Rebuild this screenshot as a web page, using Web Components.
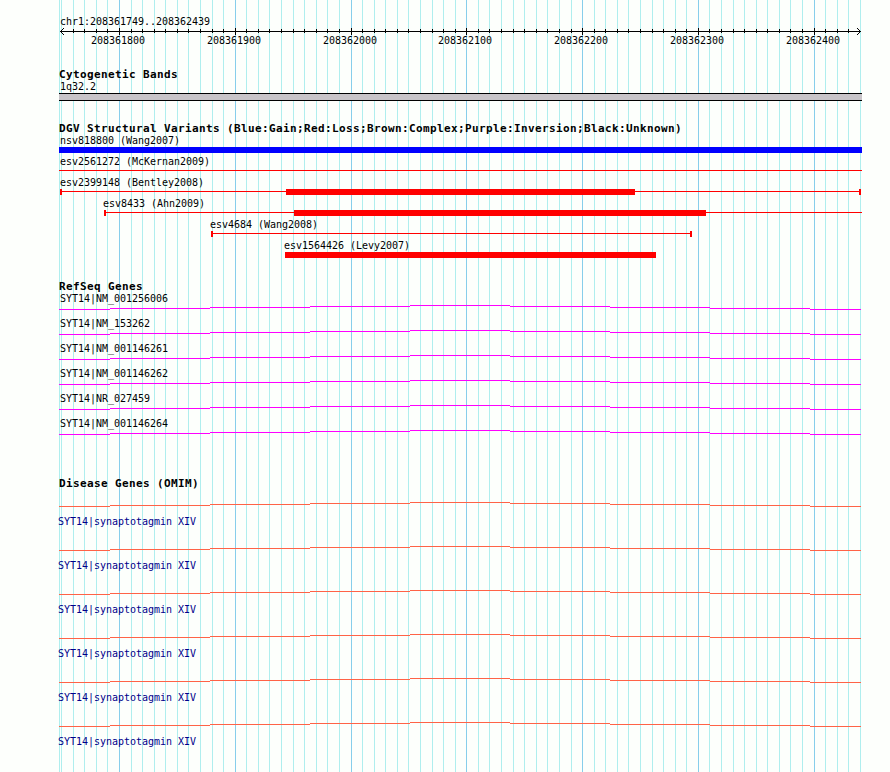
<!DOCTYPE html>
<html lang="en">
<head>
<meta charset="utf-8">
<title>chr1:208361749..208362439</title>
<style>
   body { margin: 0; background: #fdfffc; }
</style>
</head>
<body>
<genome-browser></genome-browser>

<script>
'use strict';

//x of the first 10bp line and the distance between lines
const FIRST_LINE = 61.58;
const LINE_STEP = 11.578;
const LINE_COUNT = 70;

function lineX(index) {
   return Math.floor(FIRST_LINE + LINE_STEP * index);
}

function isMajor(index) {
   return index % 10 === 5;
}

//everything is drawn from x=59 to x=862
const LEFT = 59;
const WIDTH = 803;

function rect(x, y, width, height, color) {
   return `<rect x="${x}" y="${y}" width="${width}" height="${height}" fill="${color}"/>`;
}

class GridLines extends HTMLElement {
   constructor() {
      super();
      let lines = rect(59, 0, 1, 772, '#afeeee');
      for (let i = 0; i < LINE_COUNT; i++) {
         lines += rect(lineX(i), 0, 1, 772, isMajor(i) ? '#87ceeb' : '#afeeee');
      }
      this.attachShadow({mode: 'open'}).innerHTML = `
         <style>
            :host { display: block; width: 890px; height: 772px; }
            svg { display: block; }
         </style>
         <svg width="890" height="772" shape-rendering="crispEdges">${lines}</svg>`;
   }
}

class ChromosomeRuler extends HTMLElement {
   constructor() {
      super();
      let ticks = '';
      let labels = '';
      let arrows = '';
      for (let i = 1; i < LINE_COUNT - 1; i++) {
         const x = lineX(i) - LEFT;
         ticks += isMajor(i) ? rect(x, 1, 1, 7, '#000') : rect(x, 2, 1, 4, '#000');
         if (isMajor(i)) {
            labels += `<text x="${x - 28}" y="17">${208361750 + i * 10}</text>`;
         }
      }
      for (let i = 1; i <= 3; i++) {
         [4 - i, 4 + i].forEach(y => {
            arrows += rect(1 + i, y, 1, 1, '#000') + rect(801 - i, y, 1, 1, '#000');
         });
      }
      this.attachShadow({mode: 'open'}).innerHTML = `
         <style>
            :host { display: block; height: 53px; }
            div { height: 12px; line-height: 14px; padding-left: 1px; }
            svg { display: block; overflow: visible; }
         </style>
         <div><slot></slot></div>
         <svg width="${WIDTH}" height="30" shape-rendering="crispEdges">
            ${rect(1, 4, 801, 1, '#000')}
            ${ticks}
            ${arrows}
            ${labels}
         </svg>`;
   }
}

class BrowserTrack extends HTMLElement {
   constructor() {
      super();
      this.attachShadow({mode: 'open'}).innerHTML = `
         <style>
            :host { display: block; }
            h2 { margin: 0; height: 12px; font: bold 11px/14px "DejaVu Sans Mono", monospace; letter-spacing: 0.378px; }
         </style>
         <h2></h2>
         <slot></slot>`;
   }

   connectedCallback() {
      this.shadowRoot.querySelector('h2').textContent = this.getAttribute('name');
   }
}

class CytoBand extends HTMLElement {
   constructor() {
      super();
      this.attachShadow({mode: 'open'}).innerHTML = `
         <style>
            :host { display: block; width: ${WIDTH}px; height: 42px; }
            .label { height: 13px; line-height: 14px; padding-left: 1px; }
            .band { height: 6px; background: #c8c4c8; border: solid #000; border-width: 1px 0; }
         </style>
         <div class="label"><slot></slot></div>
         <div class="band"></div>`;
   }
}

//span = thin line, box = thick bar, caps = x of the end marks
class StructuralVariant extends HTMLElement {
   connectedCallback() {
      const color = this.getAttribute('color') || '#f00';
      const numbers = name => (this.getAttribute(name) || '').split(' ').filter(Boolean).map(Number);
      const span = numbers('span');
      const box = numbers('box');
      let shapes = '';
      if (span.length) shapes += rect(span[0] - LEFT, 2, span[1] - span[0], 1, color);
      if (box.length) shapes += rect(box[0] - LEFT, 0, box[1] - box[0], 6, color);
      numbers('caps').forEach(x => { shapes += rect(x - LEFT, 0, 2, 6, color); });

      this.attachShadow({mode: 'open'}).innerHTML = `
         <style>
            :host { display: block; height: 21px; }
            .label { height: 13px; line-height: 14px; padding-left: ${Number(this.getAttribute('label-x')) - LEFT}px; }
            svg { display: block; }
         </style>
         <div class="label"><slot></slot></div>
         <svg width="${WIDTH}" height="6" shape-rendering="crispEdges">${shapes}</svg>`;
   }
}

//intron line that climbs one pixel per step up to the middle
function intron(color) {
   const edges = [59, 110, 210, 310, 410, 510, 610, 710, 810, 861];
   const tops = [4, 3, 2, 1, 0, 1, 2, 3, 4];
   let shapes = '';
   tops.forEach((top, i) => {
      shapes += rect(edges[i] - LEFT, top, edges[i + 1] - edges[i], 1, color);
   });
   return `<svg width="${WIDTH}" height="5" shape-rendering="crispEdges">${shapes}</svg>`;
}

class RefseqGene extends HTMLElement {
   constructor() {
      super();
      this.attachShadow({mode: 'open'}).innerHTML = `
         <style>
            :host { display: block; height: 25px; }
            .label { height: 13px; line-height: 14px; padding-left: 1px; }
            svg { display: block; }
         </style>
         <div class="label"><slot></slot></div>
         ${intron('#f0f')}`;
   }
}

class DiseaseGene extends HTMLElement {
   constructor() {
      super();
      this.attachShadow({mode: 'open'}).innerHTML = `
         <style>
            :host { display: block; height: 44px; color: #00008b; }
            .label { height: 12px; margin: 9px 0 0 -1px; }
            svg { display: block; }
         </style>
         ${intron('#ff6347')}
         <div class="label"><slot></slot></div>`;
   }
}

class GenomeBrowser extends HTMLElement {
   constructor() {
      super();
      this.attachShadow({mode: 'open'}).innerHTML = `
         <style>
            :host {
               display: grid;
               width: 890px;
               height: 772px;
               overflow: hidden;
               color: #000;
               font: 10px/12px "DejaVu Sans Mono", monospace;
               letter-spacing: -0.02px;
               white-space: nowrap;
            }
            grid-lines, main { grid-area: 1 / 1; }
            main { padding: 15px 0 0 ${LEFT}px; }
            .variants { height: 158px; }
            .refseq { height: 197px; }
            .disease-list { padding-top: 13px; }
         </style>
         <grid-lines></grid-lines>
         <main>
            <chromosome-ruler>chr1:208361749..208362439</chromosome-ruler>
            <browser-track name="Cytogenetic Bands">
               <cyto-band>1q32.2</cyto-band>
            </browser-track>
            <browser-track class="variants" name="DGV Structural Variants (Blue:Gain;Red:Loss;Brown:Complex;Purple:Inversion;Black:Unknown)">
               <structural-variant label-x="60" box="59 862" color="#00f">nsv818800 (Wang2007)</structural-variant>
               <structural-variant label-x="60" span="59 862">esv2561272 (McKernan2009)</structural-variant>
               <structural-variant label-x="60" span="60 861" box="286 635" caps="60 859">esv2399148 (Bentley2008)</structural-variant>
               <structural-variant label-x="103" span="104 862" box="294 706" caps="104">esv8433 (Ahn2009)</structural-variant>
               <structural-variant label-x="210" span="211 692" caps="211 690">esv4684 (Wang2008)</structural-variant>
               <structural-variant label-x="284" box="285 656">esv1564426 (Levy2007)</structural-variant>
            </browser-track>
            <browser-track class="refseq" name="RefSeq Genes">
               <refseq-gene>SYT14|NM_001256006</refseq-gene>
               <refseq-gene>SYT14|NM_153262</refseq-gene>
               <refseq-gene>SYT14|NM_001146261</refseq-gene>
               <refseq-gene>SYT14|NM_001146262</refseq-gene>
               <refseq-gene>SYT14|NR_027459</refseq-gene>
               <refseq-gene>SYT14|NM_001146264</refseq-gene>
            </browser-track>
            <browser-track name="Disease Genes (OMIM)">
               <div class="disease-list">
                  <disease-gene>SYT14|synaptotagmin XIV</disease-gene>
                  <disease-gene>SYT14|synaptotagmin XIV</disease-gene>
                  <disease-gene>SYT14|synaptotagmin XIV</disease-gene>
                  <disease-gene>SYT14|synaptotagmin XIV</disease-gene>
                  <disease-gene>SYT14|synaptotagmin XIV</disease-gene>
                  <disease-gene>SYT14|synaptotagmin XIV</disease-gene>
               </div>
            </browser-track>
         </main>`;
   }
}

customElements.define('grid-lines', GridLines);
customElements.define('chromosome-ruler', ChromosomeRuler);
customElements.define('browser-track', BrowserTrack);
customElements.define('cyto-band', CytoBand);
customElements.define('structural-variant', StructuralVariant);
customElements.define('refseq-gene', RefseqGene);
customElements.define('disease-gene', DiseaseGene);
customElements.define('genome-browser', GenomeBrowser);
</script>
</body>
</html>
